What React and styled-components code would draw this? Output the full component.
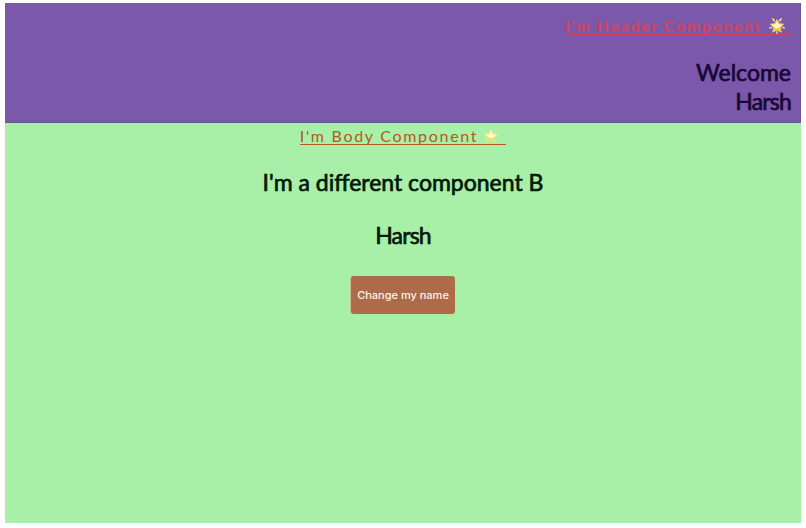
import React from "react";
import styled, { createGlobalStyle } from "styled-components";

const GlobalStyle = createGlobalStyle`
  * { box-sizing: border-box; }
  body { margin: 0; background: #fff; overflow: hidden; }
`;

const Page = styled.div`
  height: 528px;
  padding: 3px 5px 5px;
  display: flex;
  flex-direction: column;
  border-radius: 4px;
  background: #fff;
  font-family: Lato, "Open Sans", sans-serif;
`;

const Header = styled.header`
  height: 120px;
  padding: 14px 9px 0 0;
  display: flex;
  flex-direction: column;
  align-items: flex-end;
  background: #7c58aa;
  border-bottom: 1px solid #6a5a92;
  border-right: 1px solid #6c5598;
  color: #180838;
`;

const Body = styled.main`
  flex: 1;
  padding-top: 4px;
  display: flex;
  flex-direction: column;
  align-items: center;
  background: #a8f0a8;
  color: #04180a;
`;

const Label = styled.div`
  display: flex;
  align-items: center;
  height: 18px;
  padding-right: ${(p) => p.$end}px;
  border-bottom: 1px solid ${(p) => p.$color};
  color: ${(p) => p.$color};
  font-size: 16px;
  font-weight: ${(p) => p.$weight};
  line-height: 18px;
  letter-spacing: ${(p) => p.$spacing}px;
  white-space: pre;
`;

const StarIcon = styled.svg`
  width: 16px;
  height: 16px;
  flex: none;
  margin-left: ${(p) => p.$gap}px;
`;

const Title = styled.h2`
  margin: ${(p) => p.$top}px 0 0;
  font-size: 23px;
  font-weight: 400;
  line-height: 29px;
  text-align: ${(p) => p.$align || "center"};
  white-space: nowrap;
  -webkit-text-stroke: 0.7px currentColor;
`;

const Name = styled.span`
  letter-spacing: -0.8px;
`;

const Button = styled.button`
  width: 104px;
  height: 38px;
  margin-top: 26px;
  padding: 0;
  border: 0;
  border-radius: 3px;
  background: #ad6b49;
  box-shadow: -1px 0 1px #d9b596;
  color: #fff2e8;
  font: 500 11px Inter, sans-serif;
  white-space: nowrap;
`;

function Star({ gap, rays }) {
  return (
    <StarIcon viewBox="0 0 16 16" $gap={gap} aria-hidden="true">
      {rays && (
        <path d="M3.8.8 5.4 3M12.2.8 10.6 3M.8 10l1.7-.6M15.2 10l-1.7-.6M8 15.2v-1.5" stroke="#f6dc88" strokeWidth="1.5" strokeLinecap="round" />
      )}
      <path d="m8 1.4 2 4.2 4.7.6-3.3 3.2.9 4.8L8 12l-4.3 2.2.9-4.8L1.3 6.2 6 5.6Z" fill={rays ? "#f3cc58" : "#f0dc4c"} stroke={rays ? "#edc04f" : "#ecea86"} strokeWidth="1" strokeLinejoin="round" />
      <path d="m8 2.6 1.6 3.6 4 .6-3 2.4L8 10.4 5.4 9.2l-3-2.4 4-.6Z" fill="#fff9d8" />
    </StarIcon>
  );
}

export default function App() {
  return (
    <>
      <GlobalStyle />
      <Page>
        <Header>
          <Label $color="#d14461" $weight={700} $spacing={1.6} $end={6}>
            I'm Header Component<Star gap={7} rays />
          </Label>
          <Title $top={23} $align="right">
            Welcome
            <br />
            <Name>Harsh</Name>
          </Title>
        </Header>
        <Body>
          <Label $color="#b8581c" $weight={400} $spacing={1.7} $end={7}>
            I'm Body Component<Star gap={5} />
          </Label>
          <Title $top={23}>I'm a different component B</Title>
          <Title $top={24}>
            <Name>Harsh</Name>
          </Title>
          <Button type="button">Change my name</Button>
        </Body>
      </Page>
    </>
  );
}
